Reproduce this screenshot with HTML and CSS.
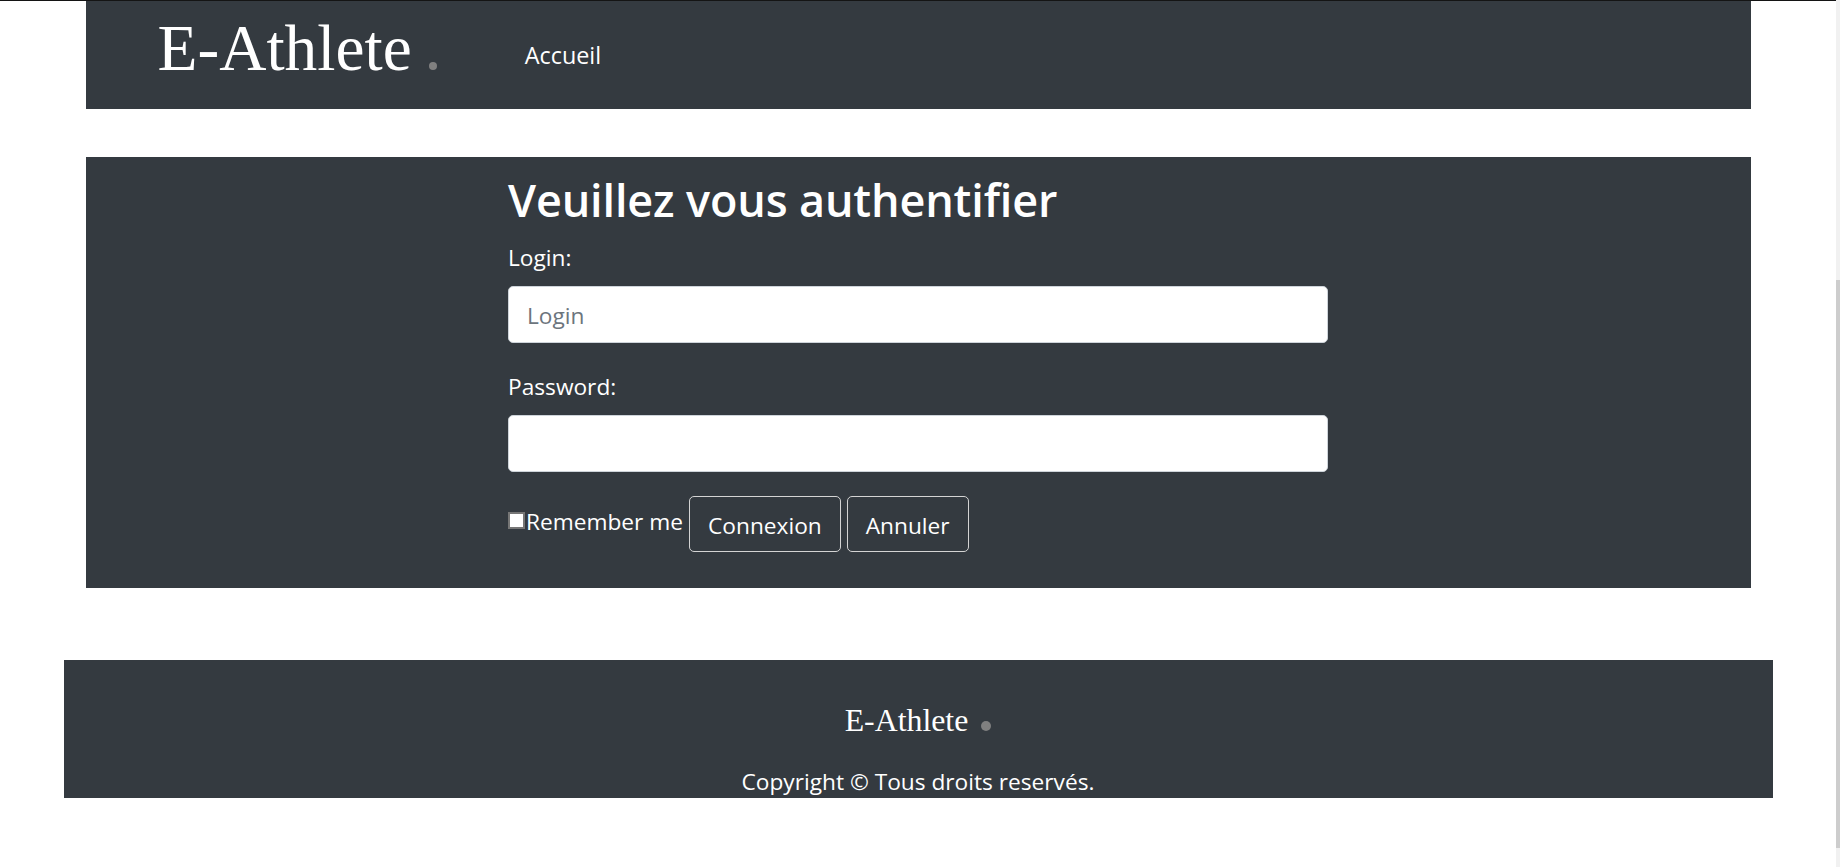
FILE: index.html
```html
<!DOCTYPE html>
<html lang="fr">
<head>
<meta charset="utf-8">
<title>E-Athlete - Connexion</title>
<link rel="stylesheet" href="styles.css">
</head>
<body>
<div class="topline"></div>
<header class="site-header">
  <a class="brand" href="#">E-Athlete<span class="brand-dot"></span></a>
  <nav class="nav"><a class="nav-link" href="#">Accueil</a></nav>
</header>

<main class="card">
  <form class="login-form">
    <h1 class="title">Veuillez vous authentifier</h1>
    <label class="field-label" for="login">Login:</label>
    <input class="field-input" id="login" type="text" placeholder="Login">
    <label class="field-label second" for="password">Password:</label>
    <input class="field-input" id="password" type="password">
    <div class="actions">
      <label class="remember"><input class="check" type="checkbox"><span>Remember me</span></label>
      <button class="btn" type="submit">Connexion</button>
      <button class="btn" type="button">Annuler</button>
    </div>
  </form>
</main>

<footer class="site-footer">
  <div class="footer-brand">E-Athlete<span class="footer-dot"></span></div>
  <p class="copyright">Copyright © Tous droits reservés.</p>
</footer>

<div class="scrollbar"><div class="scroll-thumb"></div></div>
</body>
</html>
```

FILE: styles.css
```css
html, body {
  margin: 0;
  padding: 0;
  background: #ffffff;
}

body {
  padding-right: 4px;
  font-family: "Open Sans", "Noto Sans", sans-serif;
  font-size: 22.7px;
  color: #ffffff;
}

.topline {
  height: 1px;
  background: #141414;
}

.site-header {
  width: 1665px;
  height: 108px;
  margin: 0 auto;
  background: #343a40;
  display: flex;
  align-items: flex-start;
  padding-left: 72px;
  box-sizing: border-box;
}

.brand {
  margin-top: 15px;
  font-family: "Liberation Serif", "Times New Roman", serif;
  font-size: 65.4px;
  line-height: 1;
  color: #ffffff;
  text-decoration: none;
  white-space: nowrap;
}

.brand-dot {
  display: inline-block;
  width: 8px;
  height: 8px;
  margin-left: 17px;
  border-radius: 50%;
  background: #808080;
  vertical-align: baseline;
}

.nav {
  margin-left: 88px;
  margin-top: 38px;
}

.nav-link {
  color: #ffffff;
  text-decoration: none;
  font-size: 23.4px;
  line-height: 33px;
}

.card {
  width: 1665px;
  margin: 48px auto 0;
  background: #343a40;
  padding: 16px 0 36px;
  box-sizing: border-box;
}

.login-form {
  width: 820px;
  margin: 0 auto;
  display: flex;
  flex-direction: column;
  align-items: flex-start;
}

.title {
  margin: 0 0 14px;
  font-size: 45px;
  font-weight: 600;
  line-height: 54px;
  letter-spacing: -0.15px;
}

.field-label {
  display: block;
  line-height: 33px;
  margin-bottom: 12px;
}

.field-label.second {
  margin-top: 27px;
}

.field-input {
  width: 820px;
  height: 57px;
  box-sizing: border-box;
  border: 1px solid #ced4da;
  border-radius: 5px;
  background: #ffffff;
  padding: 2px 18px 0;
  font-family: "Open Sans", "Noto Sans", sans-serif;
  font-size: 22.7px;
  color: #495057;
  outline: none;
}

.field-input::placeholder {
  color: #6c757d;
}

.actions {
  margin-top: 24px;
  display: flex;
  align-items: flex-start;
}

.remember {
  display: flex;
  align-items: flex-start;
  margin-top: 9px;
  margin-right: 6px;
  line-height: 33px;
}

.check {
  appearance: none;
  -webkit-appearance: none;
  width: 17px;
  height: 17px;
  margin: 7px 1px 0 0;
  box-sizing: border-box;
  border: 2px solid #767676;
  border-radius: 0;
  background: #ffffff;
}

.btn {
  height: 56px;
  box-sizing: border-box;
  margin-right: 6px;
  padding: 2px 18px 0;
  border: 1px solid #d4d4d4;
  border-radius: 5px;
  background: transparent;
  color: #ffffff;
  font-family: "Open Sans", "Noto Sans", sans-serif;
  font-size: 22.7px;
  line-height: 33px;
}

.site-footer {
  width: 1709px;
  margin: 72px auto 0;
  background: #343a40;
  padding-top: 42px;
  height: 138px;
  box-sizing: border-box;
  text-align: center;
}

.footer-brand {
  font-family: "Liberation Serif", "Times New Roman", serif;
  font-size: 31.8px;
  line-height: 38px;
}

.footer-dot {
  display: inline-block;
  width: 10px;
  height: 10px;
  margin-left: 13px;
  border-radius: 50%;
  background: #808080;
  vertical-align: baseline;
}

.copyright {
  margin: 25px 0 0;
  line-height: 33px;
}

.scrollbar {
  position: fixed;
  top: 0;
  right: 0;
  width: 4px;
  height: 100%;
  background: #f1f1f1;
}

.scroll-thumb {
  position: absolute;
  top: 280px;
  left: 0;
  width: 4px;
  height: 568px;
  background: #cdcdcd;
}
```
